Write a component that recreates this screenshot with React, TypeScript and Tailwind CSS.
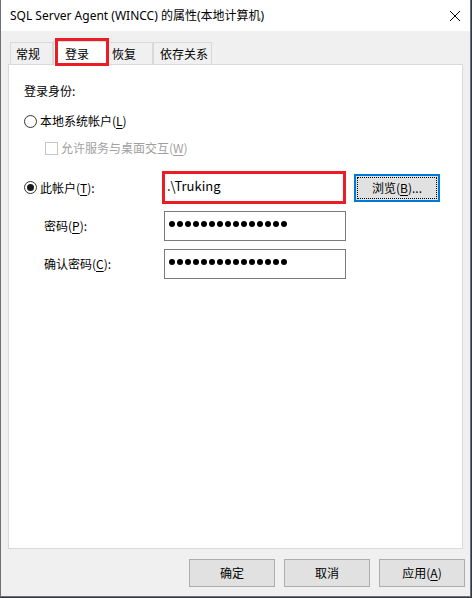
import React from 'react';

const font = "font-['Noto_Sans_CJK_SC','Noto_Sans',sans-serif]";

function Radio({ checked }: { checked?: boolean }) {
  return (
    <div className="w-[13px] h-[13px] rounded-full border border-[#333] bg-white flex items-center justify-center shrink-0">
      {checked && <div className="w-[7px] h-[7px] rounded-full bg-[#1a1a1a]" />}
    </div>
  );
}

function Dots() {
  return (
    <div className="flex gap-[2px] pl-[4px] pb-[5px]">
      {Array.from({ length: 15 }).map((_, i) => (
        <div key={i} className="w-[6px] h-[6px] rounded-full bg-black" />
      ))}
    </div>
  );
}

function Tab({ label, width, pad, selected }: { label: string; width: string; pad: string; selected?: boolean }) {
  if (selected) {
    return (
      <div className={`${width} ${pad} h-[24px] bg-white border border-b-0 border-[#d9d9d9] relative z-10 -mb-px flex items-center text-[12px]`}>
        {label}
      </div>
    );
  }
  return (
    <div className={`${width} ${pad} h-[22px] bg-[#f0f0f0] border border-b-0 border-[#d9d9d9] flex items-center text-[12px]`}>
      {label}
    </div>
  );
}

function Button({ children }: { children: React.ReactNode }) {
  return (
    <div className="w-[86px] h-[28px] bg-[#e1e1e1] border border-[#adadad] flex items-center justify-center text-[12px]">
      {children}
    </div>
  );
}

export default function App() {
  return (
    <div className={`w-[472px] h-[598px] bg-[#2d3a48] ${font} text-black`}>
      <div className="w-[471px] h-[597px] border-x border-b border-[#707070] bg-[#f0f0f0] flex flex-col">
        {/* title bar */}
        <div className="h-[31px] bg-white flex items-center pl-[9px] pr-[9px] shrink-0">
          <span className="text-[12px] leading-none font-['Noto_Sans','Noto_Sans_CJK_SC',sans-serif]">
            SQL Server Agent (WINCC) 的属性(本地计算机)
          </span>
          <svg className="ml-auto" width="12" height="12" viewBox="0 0 12 12">
            <path d="M1 1 L11 11 M11 1 L1 11" stroke="#000" strokeWidth="1" />
          </svg>
        </div>

        <div className="flex-1 flex flex-col px-[7px]">
          {/* tabs */}
          <div className="h-[33px] flex items-end pl-[2px] relative">
            <Tab label="常规" width="w-[43px]" pad="pl-[5px]" />
            <Tab label="登录" width="w-[55px]" pad="pl-[11px]" selected />
            <Tab label="恢复" width="w-[45px]" pad="pl-[3px]" />
            <Tab label="依存关系" width="w-[59px]" pad="pl-[6px]" />
            <div className="absolute left-[47px] top-[7px] w-[54px] h-[28px] border-[3px] border-[#ec1c24] z-20" />
          </div>

          {/* panel */}
          <div className="h-[485px] bg-white border border-[#d9d9d9] flex flex-col pl-[15px] text-[12px]">
            <div className="mt-[18px] leading-[16px]">登录身份:</div>

            <div className="mt-[14px] h-[16px] flex items-center">
              <Radio />
              <span className="ml-[3px]">
                本地系统帐户(<span className="underline underline-offset-2">L</span>)
              </span>
            </div>

            <div className="mt-[11px] h-[16px] flex items-center pl-[21px] text-[#a0a0a0]">
              <div className="w-[13px] h-[13px] border border-[#c6c6c6] bg-white shrink-0" />
              <span className="ml-[3px]">
                允许服务与桌面交互(<span className="underline underline-offset-2">W</span>)
              </span>
            </div>

            <div className="mt-[15px] h-[33px] flex items-center">
              <div className="w-[138px] flex items-center">
                <Radio checked />
                <span className="ml-[3px]">
                  此帐户(<span className="underline underline-offset-2">T</span>):
                </span>
              </div>
              <div className="w-[184px] h-[33px] border-[3px] border-[#ec1c24] flex items-center pl-[2px] pb-[4px] text-[13px]">
                .\Truking
              </div>
              <div className="ml-[8px] w-[86px] h-[28px] border-2 border-[#0078d7] bg-[#e1e1e1] p-[1px]">
                <div className="w-full h-full border border-dotted border-black flex items-center justify-center">
                  浏览(<span className="underline underline-offset-2">B</span>)...
                </div>
              </div>
            </div>

            <div className="mt-[7px] h-[30px] flex items-center">
              <div className="w-[140px] pl-[20px]">
                密码(<span className="underline underline-offset-2">P</span>):
              </div>
              <div className="w-[182px] h-[30px] border border-[#7a7a7a] flex items-center">
                <Dots />
              </div>
            </div>

            <div className="mt-[8px] h-[30px] flex items-center">
              <div className="w-[140px] pl-[20px]">
                确认密码(<span className="underline underline-offset-2">C</span>):
              </div>
              <div className="w-[182px] h-[30px] border border-[#7a7a7a] flex items-center">
                <Dots />
              </div>
            </div>
          </div>

          {/* footer */}
          <div className="flex justify-end gap-[9px] pt-[10px] -mr-[2px]">
            <Button>确定</Button>
            <Button>取消</Button>
            <Button>
              应用(<span className="underline underline-offset-2">A</span>)
            </Button>
          </div>
        </div>
      </div>
    </div>
  );
}
